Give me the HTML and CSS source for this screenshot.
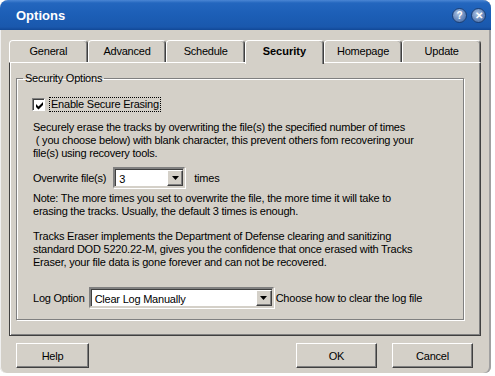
FILE: index.html
```html
<!DOCTYPE html>
<html lang="en">
<head>
    <meta charset="UTF-8">
    <title>Options</title>
    <link rel="stylesheet" href="styles.css">
</head>
<body>
    <div class="window">
        <div class="titlebar">
            <span class="title">Options</span>
            <span class="title-btn">?</span>
            <span class="title-btn">&#x2715;</span>
        </div>

        <div class="client">
            <div class="tabs">
                <div class="tab">General</div>
                <div class="tab">Advanced</div>
                <div class="tab">Schedule</div>
                <div class="tab active">Security</div>
                <div class="tab">Homepage</div>
                <div class="tab">Update</div>
            </div>

            <div class="sheet">
                <fieldset class="group">
                    <legend>Security Options</legend>

                    <div class="check-row">
                        <span class="checkbox">
                            <svg width="9" height="9" viewBox="0 0 9 9"><path d="M1 3 L3.5 5.5 L8 1 L8 4 L3.5 8.5 L1 6 Z" fill="#000"/></svg>
                        </span>
                        <span class="focus-label">Enable Secure Erasing</span>
                    </div>

                    <p class="para first">Securely erase the tracks by overwriting the file(s) the specified number of times<br>&nbsp;( you choose below) with blank character, this prevent others fom recovering your<br>file(s) using recovery tools.</p>

                    <div class="field-row overwrite">
                        <span class="label">Overwrite file(s)</span>
                        <div class="combo small">
                            <span class="combo-value">3</span>
                            <span class="drop-btn"><svg width="7" height="4" viewBox="0 0 7 4"><path d="M0 0 H7 L3.5 4 Z" fill="#000"/></svg></span>
                        </div>
                        <span class="after">times</span>
                    </div>

                    <p class="para note">Note: The more times you set to overwrite the file, the more time it will take to<br>erasing the tracks. Usually, the default 3 times is enough.</p>

                    <p class="para tracks">Tracks Eraser implements the Department of Defense clearing and sanitizing<br>standard DOD 5220.22-M, gives you the confidence that once erased with Tracks<br>Eraser, your file data is gone forever and can not be recovered.</p>

                    <div class="field-row log">
                        <span class="label">Log Option</span>
                        <div class="combo wide">
                            <span class="combo-value">Clear Log Manually</span>
                            <span class="drop-btn"><svg width="7" height="4" viewBox="0 0 7 4"><path d="M0 0 H7 L3.5 4 Z" fill="#000"/></svg></span>
                        </div>
                        <span class="after tight">Choose how to clear the log file</span>
                    </div>
                </fieldset>
            </div>

            <div class="buttons">
                <button class="btn help">Help</button>
                <span class="spacer"></span>
                <button class="btn">OK</button>
                <button class="btn">Cancel</button>
            </div>
        </div>
    </div>
</body>
</html>
```

FILE: styles.css
```css
/* General */
body {
    margin: 0;
    padding: 0;
    background-color: #ffffff;
    font-family: 'Liberation Sans', Arial, sans-serif;
    font-size: 11px;
    letter-spacing: -0.22px;
    color: #000;
}

.window {
    width: 491px;
    height: 373px;
    background-color: #d4d0c8;
    border-radius: 8px 8px 6px 6px;
    overflow: hidden;
    display: flex;
    flex-direction: column;
    box-shadow: inset -2px 0 0 #a0a0a0, inset 1px 0 0 #f0f0f0;
}

/* Title bar */
.titlebar {
    height: 30px;
    flex: none;
    display: flex;
    align-items: center;
    padding: 0 5px 0 16px;
    background: linear-gradient(#4a86d4 0, #2366be 3px, #1c5eb6 15px, #1a58ad 27px, #124896 30px);
}

.title {
    flex: 1;
    color: #ffffff;
    font-weight: bold;
    font-size: 13px;
    letter-spacing: 0;
}

.title-btn {
    width: 13px;
    height: 13px;
    margin-left: 4px;
    border-radius: 50%;
    border: 1px solid #1d3f73;
    background: radial-gradient(circle at 40% 35%, #a9c0e0 0, #6285ba 60%, #44669c 100%);
    color: #fff;
    font-weight: bold;
    font-size: 10px;
    line-height: 13px;
    text-align: center;
    letter-spacing: 0;
}

/* Client area */
.client {
    flex: 1;
    display: flex;
    flex-direction: column;
    padding: 10px 10px 0 9px;
}

/* Tabs */
.tabs {
    display: flex;
    height: 22px;
}

.tab {
    flex: 1;
    height: 21px;
    line-height: 21px;
    text-align: center;
    background-color: #d4d0c8;
    border-top: 1px solid #ffffff;
    border-left: 1px solid #ffffff;
    border-right: 1px solid #404040;
    border-radius: 4px 4px 0 0;
    box-shadow: inset -1px 0 0 #808080;
}

.tab.active {
    font-weight: bold;
    letter-spacing: 0;
    height: 23px;
    position: relative;
    z-index: 1;
}

/* Tab sheet */
.sheet {
    height: 272px;
    border: 1px solid #404040;
    border-top-color: #ffffff;
    box-shadow: inset 1px 0 0 #ffffff, inset -1px -1px 0 #808080;
    padding: 0 16px 0 6px;
}

.group {
    margin: 9px 0 0 0;
    padding: 0 10px 10px 16px;
    height: 236px;
    border: 1px solid #808080;
    box-shadow: 1px 1px 0 #ffffff, inset 1px 1px 0 #ffffff;
}

.group legend {
    margin-left: -10px;
    padding: 0 2px;
    line-height: 13px;
}

/* Checkbox */
.check-row {
    display: flex;
    align-items: center;
    height: 15px;
    margin-top: 12px;
}

.checkbox {
    width: 11px;
    height: 11px;
    margin-left: -1px;
    background-color: #ffffff;
    border-top: 1px solid #808080;
    border-left: 1px solid #808080;
    border-right: 1px solid #ffffff;
    border-bottom: 1px solid #ffffff;
    box-shadow: inset 1px 1px 0 #404040;
    display: flex;
    align-items: center;
    justify-content: center;
}

.checkbox svg {
    margin: 1px 0 0 1px;
}

.focus-label {
    margin-left: 4px;
    padding: 0 1px;
    line-height: 13px;
    border: 1px dotted #000;
}

/* Paragraphs */
.para {
    margin: 0;
    line-height: 13px;
}

.para.first {
    margin-top: 9px;
}

.para.note {
    margin-top: 4px;
}

.para.tracks {
    margin-top: 12px;
}

/* Field rows */
.field-row {
    display: flex;
    align-items: center;
    height: 21px;
}

.field-row.overwrite {
    margin-top: 7px;
}

.field-row.log {
    margin-top: 18px;
}

.field-row .label {
    margin-right: 7px;
}

.field-row.log .label {
    margin-right: 4px;
}

.combo {
    height: 17px;
    display: flex;
    align-items: center;
    background-color: #ffffff;
    border-top: 2px solid #808080;
    border-left: 2px solid #808080;
    border-right: 2px solid #d4d0c8;
    border-bottom: 2px solid #d4d0c8;
    box-shadow: inset 1px 1px 0 #404040, 1px 1px 0 #ffffff;
}

.combo.small {
    width: 68px;
}

.combo.wide {
    width: 181px;
}

.combo-value {
    flex: 1;
    padding-left: 4px;
    padding-top: 2px;
}

.drop-btn {
    width: 14px;
    height: 14px;
    background-color: #d4d0c8;
    border-top: 1px solid #ffffff;
    border-left: 1px solid #ffffff;
    border-right: 1px solid #404040;
    border-bottom: 1px solid #404040;
    box-shadow: inset -1px -1px 0 #808080;
    display: flex;
    align-items: center;
    justify-content: center;
}

.after {
    margin-left: 9px;
}

.after.tight {
    margin-left: 2px;
}

/* Buttons */
.buttons {
    display: flex;
    margin-top: 7px;
    padding: 0 8px 0 7px;
}

.spacer {
    flex: 1;
}

.btn {
    width: 81px;
    height: 25px;
    margin-left: 15px;
    font-family: inherit;
    font-size: 11px;
    letter-spacing: -0.22px;
    color: #000;
    background-color: #d4d0c8;
    border-top: 1px solid #ffffff;
    border-left: 1px solid #ffffff;
    border-right: 1px solid #404040;
    border-bottom: 1px solid #404040;
    box-shadow: inset -1px -1px 0 #808080;
    padding: 0;
}

.btn.help {
    width: 73px;
    margin-left: 0;
}
```
